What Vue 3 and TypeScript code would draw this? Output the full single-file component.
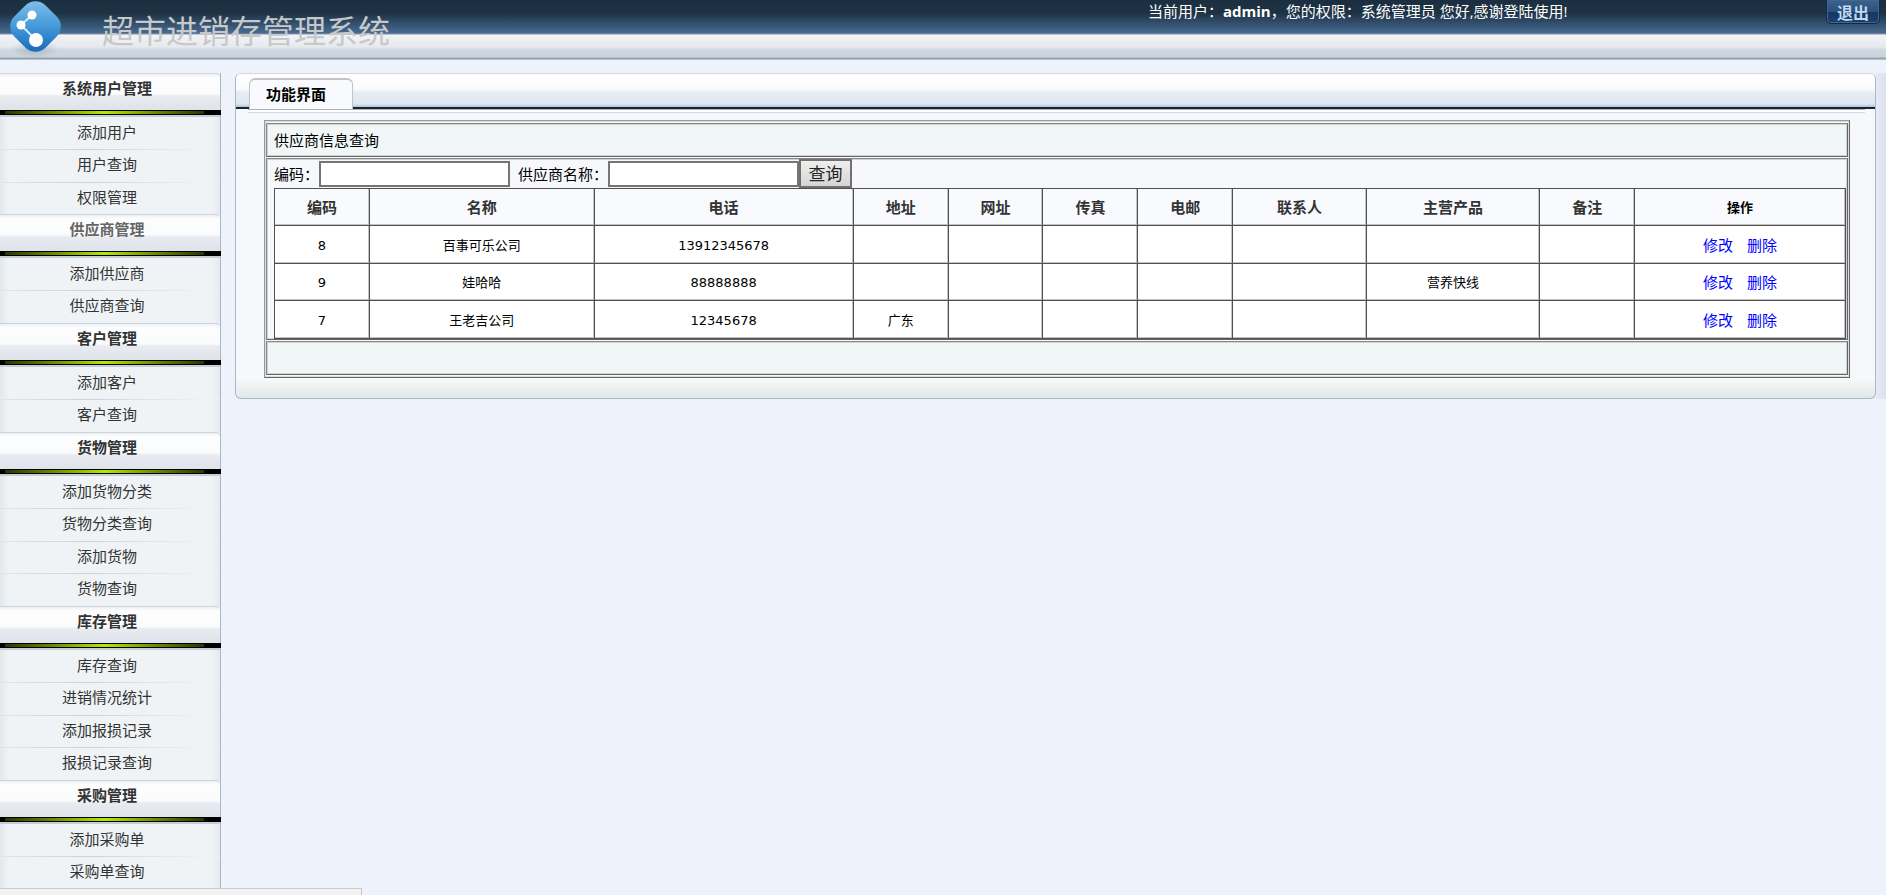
<script setup lang="ts">
import { ref } from 'vue'

interface MenuGroup {
  title: string
  active?: boolean
  items: string[]
}

interface Supplier {
  id: number
  name: string
  phone: string
  address: string
  site: string
  fax: string
  email: string
  contact: string
  product: string
  note: string
}

const groups: MenuGroup[] = [
  { title: '系统用户管理', items: ['添加用户', '用户查询', '权限管理'] },
  { title: '供应商管理', active: true, items: ['添加供应商', '供应商查询'] },
  { title: '客户管理', items: ['添加客户', '客户查询'] },
  { title: '货物管理', items: ['添加货物分类', '货物分类查询', '添加货物', '货物查询'] },
  { title: '库存管理', items: ['库存查询', '进销情况统计', '添加报损记录', '报损记录查询'] },
  { title: '采购管理', items: ['添加采购单', '采购单查询'] },
]

const columns = ['编码', '名称', '电话', '地址', '网址', '传真', '电邮', '联系人', '主营产品', '备注']

const blank = { address: '', site: '', fax: '', email: '', contact: '', product: '', note: '' }
const suppliers: Supplier[] = [
  { ...blank, id: 8, name: '百事可乐公司', phone: '13912345678' },
  { ...blank, id: 9, name: '娃哈哈', phone: '88888888', product: '营养快线' },
  { ...blank, id: 7, name: '王老吉公司', phone: '12345678', address: '广东' },
]

const code = ref('')
const supplierName = ref('')
</script>

<template>
  <div class="page">
    <header class="top">
      <svg class="logo" viewBox="0 0 56 60" width="56" height="60" aria-hidden="true">
        <defs>
          <linearGradient id="logoFill" x1="0" y1="0" x2="1" y2="1">
            <stop offset="0" stop-color="#8cc6ee" />
            <stop offset="0.5" stop-color="#4499d8" />
            <stop offset="1" stop-color="#0f60b2" />
          </linearGradient>
          <radialGradient id="logoShade">
            <stop offset="0" stop-color="#3c5468" stop-opacity="0.25" />
            <stop offset="1" stop-color="#3c5468" stop-opacity="0" />
          </radialGradient>
        </defs>
        <ellipse cx="28" cy="49" rx="24" ry="9" fill="url(#logoShade)" />
        <rect
          x="6.5" y="4.5" width="44" height="44" rx="14"
          transform="rotate(45 28.5 26.5)" fill="url(#logoFill)"
        />
        <path d="M25 15L14 25L29 40" fill="none" stroke="#d8ebf8" stroke-width="2" />
        <circle cx="25" cy="15" r="4.5" fill="#fff" />
        <circle cx="14" cy="25" r="4.5" fill="#fff" />
        <circle cx="29" cy="40" r="7" fill="#fff" />
      </svg>
      <h1 class="title">超市进销存管理系统</h1>
      <p class="welcome">当前用户：<b>admin</b>，您的权限：系统管理员 您好,感谢登陆使用!</p>
      <button type="button" class="logout">退出</button>
    </header>

    <div class="body">
      <nav class="side">
        <section v-for="group in groups" :key="group.title" class="group">
          <h2 class="group-title" :class="{ active: group.active }">{{ group.title }}</h2>
          <ul class="menu">
            <li v-for="item in group.items" :key="item">
              <a href="#">{{ item }}</a>
            </li>
          </ul>
        </section>
      </nav>

      <main class="main">
        <div class="panel">
          <div class="tabs"><h2 class="tab">功能界面</h2></div>
          <div class="content">
            <div class="frame">
              <div class="cell bar">供应商信息查询</div>
              <div class="cell">
                <form class="search" @submit.prevent>
                  <label for="code">编码：</label>
                  <input id="code" v-model="code" type="text" />
                  <label for="supplier" class="second">供应商名称：</label>
                  <input id="supplier" v-model="supplierName" type="text" />
                  <button type="submit">查询</button>
                </form>
                <table class="data">
                  <colgroup>
                    <col class="w-s" /><col class="w-name" /><col class="w-phone" />
                    <col class="w-s" /><col class="w-s" /><col class="w-s" /><col class="w-s" />
                    <col class="w-contact" /><col class="w-product" /><col class="w-s" /><col />
                  </colgroup>
                  <thead>
                    <tr>
                      <th v-for="column in columns" :key="column" scope="col">{{ column }}</th>
                      <th scope="col" class="ops-head">操作</th>
                    </tr>
                  </thead>
                  <tbody>
                    <tr v-for="row in suppliers" :key="row.id">
                      <td>{{ row.id }}</td>
                      <td>{{ row.name }}</td>
                      <td>{{ row.phone }}</td>
                      <td>{{ row.address }}</td>
                      <td>{{ row.site }}</td>
                      <td>{{ row.fax }}</td>
                      <td>{{ row.email }}</td>
                      <td>{{ row.contact }}</td>
                      <td>{{ row.product }}</td>
                      <td>{{ row.note }}</td>
                      <td class="ops"><a href="#">修改</a><a href="#">删除</a></td>
                    </tr>
                  </tbody>
                </table>
              </div>
              <div class="cell bar"></div>
            </div>
          </div>
        </div>
      </main>
    </div>
    <div class="status"></div>
  </div>
</template>

<style>
body {
  background: #edf2fb;
  overflow: hidden;
}
</style>

<style scoped>
.page {
  height: 100vh;
  overflow: hidden;
  display: flex;
  flex-direction: column;
  font-family: 'Open Sans', 'Noto Sans CJK SC', sans-serif;
  font-size: 15px;
  color: #000;
}
.page * {
  box-sizing: border-box;
}
.top {
  flex: none;
  display: flex;
  align-items: flex-start;
  height: 60px;
  background: linear-gradient(
    #1c2f40 0,
    #1d3344 13px,
    #2c4660 20px,
    #466b91 33px,
    #8792a8 34px,
    #f2f3f6 35px,
    #e6e9ee 47px,
    #cfd7df 50px,
    #cbd4dc 57px,
    #93a5b3 58px,
    #93a5b3 59px,
    #d5dde8 60px
  );
}
.logo {
  flex: none;
  margin-left: 7px;
}
.title {
  flex: 1;
  margin: 5px 0 0 39px;
  font-family: 'Noto Sans CJK SC', sans-serif;
  font-size: 32px;
  line-height: 48px;
  font-weight: 400;
  color: #c8c8c8;
}
.welcome {
  width: 678px;
  margin: 0;
  font-size: 15px;
  line-height: 22px;
  color: #fff;
}
.logout {
  width: 54px;
  height: 24px;
  margin-right: 6px;
  padding: 0;
  border: 1px solid #14294a;
  border-top: 0;
  border-radius: 0 0 5px 5px;
  background: linear-gradient(#3b628c, #2d527d 50%, #16365f 51%, #1d426e);
  box-shadow: inset 0 0 0 1px #41668f;
  font: bold 16px/20px 'Noto Sans CJK SC', sans-serif;
  color: #bcd9ef;
}
.body {
  flex: 1;
  min-height: 0;
  display: flex;
  align-items: flex-start;
  gap: 14px;
  padding-top: 13px;
}
.side {
  flex: none;
  width: 221px;
  border-right: 1px solid #a9b8c5;
}
.group-title {
  position: relative;
  height: 44px;
  margin: 0;
  padding-right: 6px;
  border-top: 1px solid #c8d3de;
  border-radius: 0 4px 0 0;
  background: linear-gradient(#eef1f4, #fdfdfe 4px, #fafbfc 20px, #e8ebf0 22px, #dfe3ea 36px, #c3cad4 43px);
  font-size: 15px;
  line-height: 28px;
  text-align: center;
  color: #333;
}
.group-title.active {
  color: #666;
}
.group-title::after {
  content: '';
  position: absolute;
  left: 0;
  right: -1px;
  bottom: 2px;
  height: 3px;
  border: solid #000;
  border-width: 1px 17px 1px 5px;
  background: linear-gradient(90deg, #2c3500, #6f8c00 25%, #b4ea00 50%, #6f8c00 75%, #2c3500);
}
.menu {
  margin: 0;
  padding: 0;
  list-style: none;
  background: linear-gradient(90deg, #e3e8ec, #eff3f6 8px, #eff3f6 212px, #e4eaf0);
}
.menu li {
  height: 32px;
  padding-right: 6px;
  text-align: center;
}
.menu li:nth-child(even) {
  height: 33px;
}
.menu li + li {
  border-top: 1px solid;
  border-image: linear-gradient(90deg, #e0e5e9, #ccd3d8 40%, #eff3f6 95%) 1;
}
.menu a {
  display: block;
  line-height: 31px;
  color: #333;
  text-decoration: none;
}
.menu li + li a {
  line-height: 29px;
}
.main {
  flex: 1;
  min-width: 0;
  padding-right: 10px;
  background: linear-gradient(90deg, #e6eaf5, #dde1ee) right / 10px 100% no-repeat;
}
.panel {
  border: 1px solid #a9b8c6;
  border-top-color: #cfd8e3;
  border-radius: 6px;
  background: linear-gradient(#f7f8fb calc(100% - 22px), #f8faf9 calc(100% - 20px), #e2e7ea);
  overflow: hidden;
}
.tabs {
  display: flex;
  align-items: flex-end;
  height: 35px;
  padding-left: 13px;
  border-bottom: 2px solid #14263a;
  background: linear-gradient(#fff, #fafbfc 15px, #e6edf2 19px, #dde7ee 30px, #b0c2cf);
}
.tab {
  width: 104px;
  height: 31px;
  margin: 0 0 -2px;
  padding-left: 16px;
  border: solid #c0c4ca;
  border-width: 2px 1px 0;
  border-radius: 6px 6px 0 0;
  background: #f8fafd;
  font-size: 15px;
  line-height: 28px;
}
.content {
  padding: 11px 25px 20px 28px;
  background: linear-gradient(#a9b3bc 1px, #fff 1px, #fff 3px, #cfdbe6 3px, #cfdbe6 4px, transparent 4px) 12px 0 / calc(100% - 22px) 100% no-repeat;
}
.frame {
  display: grid;
  gap: 1px;
  padding: 2px 1px;
  border: 1px solid #999;
  border-color: #999 #666 #666 #999;
  box-shadow: inset 0 0 0 1px #dcdcdc;
}
.cell {
  padding: 0 1px 0 7px;
  border: 1px solid;
  border-color: #888 #666 #666 #888;
  box-shadow: inset 0 0 0 1px #d0d3d4;
}
.cell.bar {
  height: 34px;
  line-height: 32px;
  background: #f1f7f6;
}
.search {
  display: flex;
  align-items: center;
  height: 29px;
}
.search label {
  line-height: 26px;
}
.search .second {
  margin-left: 8px;
}
.search input {
  width: 191px;
  height: 26px;
  padding: 2px;
  border: 2px solid #757575;
  background: #fff;
  font: inherit;
}
.search button {
  width: 53px;
  height: 29px;
  padding: 0 0 1px;
  border: 2px solid #707070;
  background: linear-gradient(#eee, #d6d6d6);
  font: 17px/24px 'Noto Sans CJK SC', sans-serif;
  color: #222;
}
.data {
  width: 100%;
  table-layout: fixed;
  border-collapse: collapse;
  text-align: center;
  background: #fff;
}
.w-s { width: 6.04%; }
.w-name { width: 14.3%; }
.w-phone { width: 16.5%; }
.w-contact { width: 8.5%; }
.w-product { width: 11.05%; }
.data th,
.data td {
  padding: 0;
  border: 1px solid #505050;
  box-shadow: inset -1px -1px #c4c4c4;
}
.data th {
  height: 37px;
  padding-bottom: 2px;
  background: #f9fafd;
  font-size: 15px;
  color: #333;
}
.data .ops-head {
  font-size: 13px;
  color: #000;
}
.data td {
  height: 37px;
  padding-top: 2px;
  font: 13px/20px 'DejaVu Sans', 'Noto Sans CJK SC', sans-serif;
}
.data tr:nth-child(odd) td {
  height: 38px;
}
.data .ops {
  font-size: 15px;
}
.ops a {
  color: #00f;
  text-decoration: none;
}
.ops a + a {
  margin-left: 14px;
}
.status {
  position: fixed;
  left: 0;
  bottom: 0;
  width: 362px;
  height: 7px;
  border: solid #c8c8c8;
  border-width: 1px 1px 0 0;
  background: #f2f2f2;
}
</style>
